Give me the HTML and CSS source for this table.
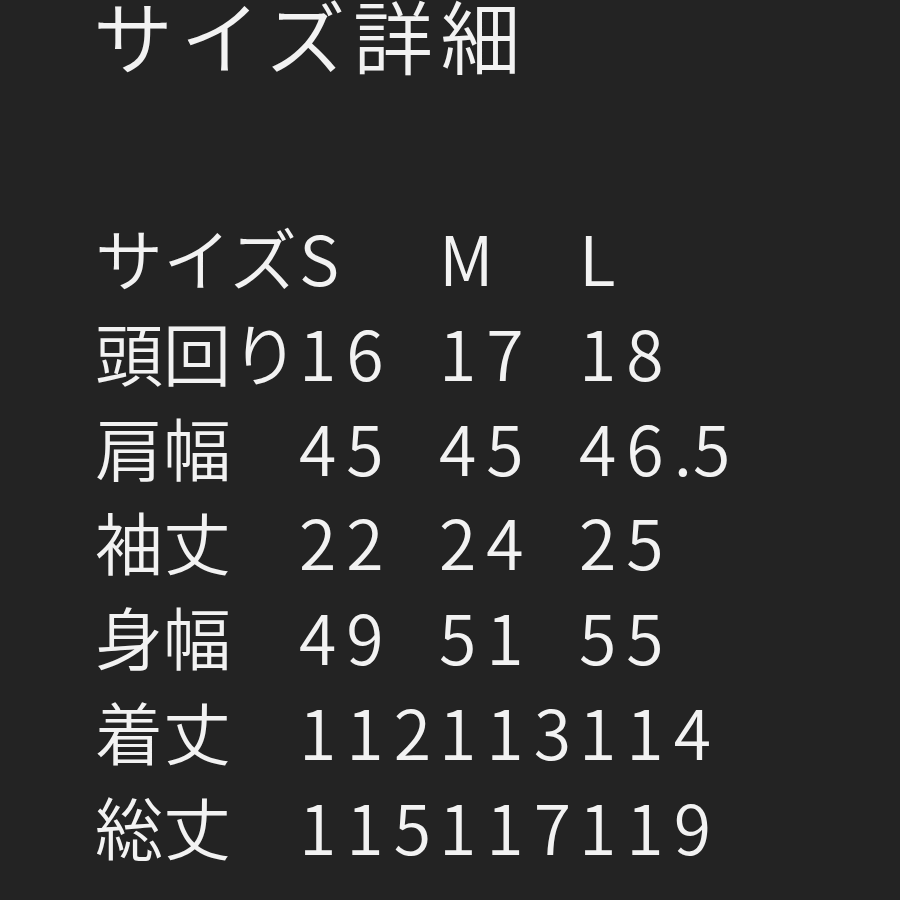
FILE: index.html
```html
<!DOCTYPE html>
<html lang="ja">
<head>
<meta charset="utf-8">
<title>サイズ詳細</title>
<link rel="stylesheet" href="styles.css">
</head>
<body>
<main class="page">
  <h1 class="title">サイズ詳細</h1>
  <div class="sizes">
    <div class="row"><span class="label">サイズ</span><span class="val">S</span><span class="val">M</span><span class="val">L</span></div>
    <div class="row"><span class="label">頭回り</span><span class="val">16</span><span class="val">17</span><span class="val">18</span></div>
    <div class="row"><span class="label">肩幅</span><span class="val">45</span><span class="val">45</span><span class="val">46<span class="dot">.</span>5</span></div>
    <div class="row"><span class="label">袖丈</span><span class="val">22</span><span class="val">24</span><span class="val">25</span></div>
    <div class="row"><span class="label">身幅</span><span class="val">49</span><span class="val">51</span><span class="val">55</span></div>
    <div class="row"><span class="label">着丈</span><span class="val">112</span><span class="val">113</span><span class="val">114</span></div>
    <div class="row"><span class="label">総丈</span><span class="val">115</span><span class="val">117</span><span class="val">119</span></div>
  </div>
</main>
</body>
</html>
```

FILE: styles.css
```css
html, body {
  margin: 0;
  padding: 0;
  background: #232323;
}

.page {
  width: 900px;
  height: 900px;
  overflow: hidden;
  box-sizing: border-box;
  padding-left: 95px;
  color: #f2f2f2;
  font-family: "Noto Sans CJK JP", "Noto Sans", sans-serif;
  font-weight: 350;
}

.title {
  margin: 0 0 0 -2px;
  font-size: 80px;
  font-weight: 350;
  line-height: 66px;
  letter-spacing: 7.5px;
  white-space: nowrap;
}

.sizes {
  margin-top: 144px;
  font-size: 68px;
  line-height: 94.8px;
}

.row {
  display: grid;
  grid-template-columns: 204px 140px 140px 200px;
  white-space: nowrap;
}

.val {
  font-variant-numeric: tabular-nums;
  letter-spacing: 10px;
}

.dot {
  letter-spacing: 1px;
}
```
